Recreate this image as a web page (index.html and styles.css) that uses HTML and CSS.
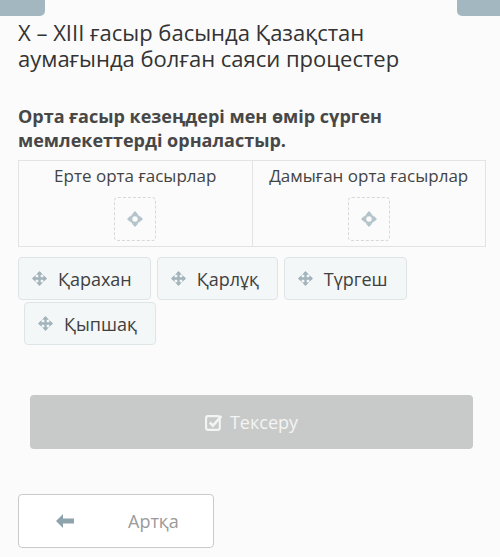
FILE: index.html
```html
<!DOCTYPE html>
<html lang="kk">
<head>
    <meta charset="UTF-8">
    <title>Орта ғасыр</title>
    <link rel="stylesheet" href="styles.css">
</head>
<body>
    <div class="topbar">
        <span class="tab"></span>
        <span class="tab"></span>
    </div>

    <div class="page">
        <h1>X – XIII ғасыр басында Қазақстан аумағында болған саяси процестер</h1>

        <p class="question">Орта ғасыр кезеңдері мен өмір сүрген мемлекеттерді орналастыр.</p>

        <div class="table">
            <div class="col">
                <div class="col-title">Ерте орта ғасырлар</div>
                <div class="drop">
                    <svg width="16" height="16" viewBox="0 0 14 14"><path d="M7 0l3 3.2H4zM7 14l3-3.2H4zM0 7l3.2-3v6zM14 7l-3.2-3v6z" fill="#b4c3ca"/><circle cx="7" cy="7" r="3.4" fill="none" stroke="#b4c3ca" stroke-width="2"/></svg>
                </div>
            </div>
            <div class="col">
                <div class="col-title">Дамыған орта ғасырлар</div>
                <div class="drop">
                    <svg width="16" height="16" viewBox="0 0 14 14"><path d="M7 0l3 3.2H4zM7 14l3-3.2H4zM0 7l3.2-3v6zM14 7l-3.2-3v6z" fill="#b4c3ca"/><circle cx="7" cy="7" r="3.4" fill="none" stroke="#b4c3ca" stroke-width="2"/></svg>
                </div>
            </div>
        </div>

        <div class="items">
            <div class="item"><svg class="move" viewBox="0 0 14 14"><path d="M7 1v12M1 7h12" stroke="#a3b4bb" stroke-width="2.2"/><path d="M7 0l3.2 3.4H3.8zM7 14l3.2-3.4H3.8zM0 7l3.4-3.2v6.4zM14 7l-3.4-3.2v6.4z" fill="#a3b4bb"/></svg>Қарахан</div>
            <div class="item"><svg class="move" viewBox="0 0 14 14"><path d="M7 1v12M1 7h12" stroke="#a3b4bb" stroke-width="2.2"/><path d="M7 0l3.2 3.4H3.8zM7 14l3.2-3.4H3.8zM0 7l3.4-3.2v6.4zM14 7l-3.4-3.2v6.4z" fill="#a3b4bb"/></svg>Қарлұқ</div>
            <div class="item"><svg class="move" viewBox="0 0 14 14"><path d="M7 1v12M1 7h12" stroke="#a3b4bb" stroke-width="2.2"/><path d="M7 0l3.2 3.4H3.8zM7 14l3.2-3.4H3.8zM0 7l3.4-3.2v6.4zM14 7l-3.4-3.2v6.4z" fill="#a3b4bb"/></svg>Түргеш</div>
            <div class="item shifted"><svg class="move" viewBox="0 0 14 14"><path d="M7 1v12M1 7h12" stroke="#a3b4bb" stroke-width="2.2"/><path d="M7 0l3.2 3.4H3.8zM7 14l3.2-3.4H3.8zM0 7l3.4-3.2v6.4zM14 7l-3.4-3.2v6.4z" fill="#a3b4bb"/></svg>Қыпшақ</div>
        </div>

        <button class="check">
            <svg width="19" height="17" viewBox="0 0 18 16"><rect x="1" y="2" width="13" height="13" rx="2" fill="none" stroke="#f4f4f4" stroke-width="2"/><path d="M4.5 8l3 3 8-9" fill="none" stroke="#f4f4f4" stroke-width="2.4"/></svg>
            Тексеру
        </button>

        <button class="back">
            <svg width="18" height="14" viewBox="0 0 18 14"><path d="M0 7l7-7v4.5h11v5H7V14z" fill="#8ea3ab"/></svg>
            <span>Артқа</span>
        </button>
    </div>
</body>
</html>
```

FILE: styles.css
```css
body {
    margin: 0;
    background: #fafbfa;
    font-family: 'Open Sans', sans-serif;
    color: #3d3d3d;
}

.topbar {
    display: flex;
    justify-content: space-between;
    height: 16px;
}

.tab {
    width: 45px;
    height: 16px;
    background: #a3b7c1;
    border-radius: 0 0 5px 0;
}

.tab:last-child {
    width: 43px;
    border-radius: 0 0 0 5px;
}

.page {
    padding: 0 14px 0 18px;
}

h1 {
    margin: 3px 0 0;
    font-size: 22px;
    font-weight: normal;
    line-height: 26px;
    color: #333;
}

.question {
    margin: 33px 0 0;
    font-size: 18px;
    font-weight: bold;
    line-height: 24px;
    color: #474747;
}

.table {
    display: flex;
    margin-top: 8px;
    border: 1px solid #e2e4e3;
    height: 85px;
}

.col {
    flex: 1;
    display: flex;
    flex-direction: column;
    align-items: center;
}

.col + .col {
    border-left: 1px solid #e2e4e3;
}

.col-title {
    margin-top: 3px;
    font-size: 17px;
    line-height: 23px;
    color: #444;
}

.drop {
    margin-top: 10px;
    width: 40px;
    height: 42px;
    border: 1px dashed #d6d9d8;
    border-radius: 4px;
    display: flex;
    align-items: center;
    justify-content: center;
}

.items {
    display: flex;
    flex-wrap: wrap;
    gap: 2px 6px;
    margin-top: 10px;
}

.item {
    display: flex;
    align-items: center;
    height: 41px;
    padding: 0 18px 0 13px;
    background: #f3f7f8;
    border: 1px solid #dfe5e6;
    border-radius: 4px;
    font-size: 18px;
    color: #404040;
}

.item.shifted {
    margin-left: 6px;
}

.move {
    width: 15px;
    height: 15px;
    margin-right: 11px;
}

button {
    font-family: 'Open Sans', sans-serif;
    cursor: pointer;
}

.check {
    display: flex;
    align-items: center;
    justify-content: center;
    gap: 6px;
    width: 443px;
    height: 54px;
    margin: 50px 0 0 12px;
    border: none;
    border-radius: 4px;
    background: #c8cac9;
    color: #f4f4f4;
    font-size: 18px;
}

.back {
    display: flex;
    align-items: center;
    width: 196px;
    height: 54px;
    margin-top: 45px;
    padding: 0 0 0 37px;
    background: #fff;
    border: 1px solid #c9cbca;
    border-radius: 4px;
    color: #9a9a9a;
    font-size: 18px;
}

.back span {
    margin-left: 54px;
}
```
